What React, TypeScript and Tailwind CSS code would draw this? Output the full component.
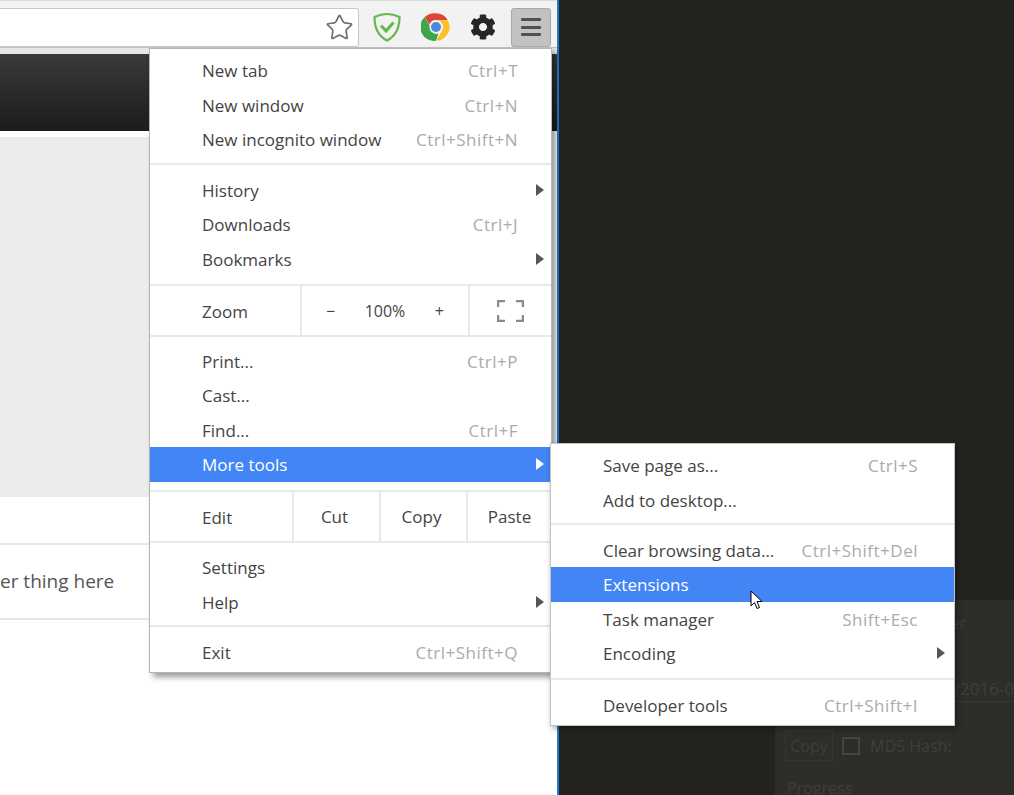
import { Star } from 'lucide-react'
import { FaCog } from 'react-icons/fa'

const font = 'font-["Open_Sans","Noto_Sans",sans-serif]'

function Arrow({ active }: { active?: boolean }) {
  return (
    <svg width="8" height="12" viewBox="0 0 8 12">
      <path d="M0 0L8 6L0 12Z" fill={active ? '#ffffff' : '#555555'} />
    </svg>
  )
}

function Row({ label, shortcut, arrow, active, slot = 'menu' }: {
  label: string
  shortcut?: string
  arrow?: boolean
  active?: boolean
  slot?: 'menu' | 'sub'
}) {
  return (
    <div className={`flex h-[34.5px] items-center pl-[52px] text-[17px] ${active ? 'bg-[#4285f4] text-white' : 'text-[#444444]'}`}>
      <span className="flex-1 pt-[1px]">{label}</span>
      {shortcut && <span className="pt-[1px] tracking-[0.5px] text-[#ababab]">{shortcut}</span>}
      <div className={`flex shrink-0 items-center ${slot === 'menu' ? 'w-[33px] pl-[18px]' : 'w-[36px] pl-[19px]'}`}>
        {arrow && <Arrow active={active} />}
      </div>
    </div>
  )
}

function Sep() {
  return <div className="h-[2px] shrink-0 bg-[#e9e9e9]" />
}

function Cell({ width, children }: { width: number | string; children?: React.ReactNode }) {
  return (
    <div className="flex h-full items-center justify-center border-l-2 border-[#e9e9e9]" style={{ width }}>
      {children}
    </div>
  )
}

function ChromeLogo() {
  return (
    <svg width="30" height="30" viewBox="0 0 48 48">
      <circle cx="24" cy="24" r="23" fill="#ffffff" />
      <path d="M24 2A22 22 0 0 1 43 13H24A11 11 0 0 0 13.5 20.5L6 8A22 22 0 0 1 24 2Z" fill="#db4437" />
      <path d="M43 13A22 22 0 0 1 24 46L33.5 29.5A11 11 0 0 0 33.5 18.5 11 11 0 0 0 24 13Z" fill="#fbc02d" />
      <path d="M6 8L15 24A11 11 0 0 0 28 34.5L24 46A22 22 0 0 1 6 8Z" fill="#3ba74a" />
      <circle cx="24" cy="24" r="10.5" fill="#f4f4f4" />
      <circle cx="24" cy="24" r="8" fill="#4a89dc" />
    </svg>
  )
}

function Shield() {
  return (
    <svg width="30" height="30" viewBox="0 0 30 30" fill="none">
      <path d="M15 2C10 2 5.5 3.5 2.5 5C2.5 16 6 24 15 28.5C24 24 27.5 16 27.5 5C24.5 3.5 20 2 15 2Z" stroke="#62b94c" strokeWidth="2.2" />
      <path d="M9 13.5L14 19L21.5 10.5" stroke="#62b94c" strokeWidth="3" />
    </svg>
  )
}

function Cursor() {
  return (
    <svg width="14" height="20" viewBox="0 0 14 20">
      <path d="M1 1V16L4.5 12.5L7 18.5L9.5 17.5L7 11.5H12Z" fill="#ffffff" stroke="#000000" strokeWidth="1" />
    </svg>
  )
}

export default function App() {
  return (
    <div className={`relative flex h-[795px] w-[1014px] overflow-hidden bg-[#22221f] ${font}`}>
      {/* browser window */}
      <div className="flex h-full w-[559px] shrink-0 flex-col border-r-2 border-[#1e78d2] bg-white">
        <div className="flex h-[48px] shrink-0 items-center border-t border-b border-t-[#dcdcdc] border-b-[#c4c4c4] bg-[#f2f2f2] pt-[6px]">
          <div className="flex h-[39px] w-[359px] items-center justify-end rounded-r-[3px] border border-l-0 border-[#c8c8c8] bg-white pr-[4px]">
            <Star size={29} strokeWidth={1.4} className="text-[#6e6e6e]" />
          </div>
          <div className="ml-[13px]"><Shield /></div>
          <div className="ml-[19px]"><ChromeLogo /></div>
          <FaCog size={26} className="ml-[19px] text-[#262626]" />
          <div className="ml-[15px] flex h-[39px] w-[40px] flex-col items-center justify-center gap-[4.5px] rounded-[3px] border border-[#a8a8a8] bg-[#c2c2c2]">
            <div className="h-[3px] w-[20px] rounded-[1px] bg-[#505050]" />
            <div className="h-[3px] w-[20px] rounded-[1px] bg-[#505050]" />
            <div className="h-[3px] w-[20px] rounded-[1px] bg-[#505050]" />
          </div>
        </div>
        <div className="h-[6px] shrink-0 bg-[#e8e8e8]" />
        <div className="h-[77px] shrink-0 bg-gradient-to-b from-[#3a3a3a] to-[#1c1c1c]" />
        <div className="h-[6px] shrink-0" />
        <div className="h-[360px] w-[500px] shrink-0 bg-[#ececec]" />
        <div className="h-[46px] shrink-0" />
        <div className="flex h-[77px] shrink-0 items-center border-y-2 border-[#e6e6e6] text-[19px] whitespace-nowrap text-[#555555]">
          er thing here
        </div>
      </div>

      {/* app behind the browser */}
      <div className="flex-1 pt-[600px] pl-[216px]">
        <div className="h-[195px] overflow-hidden bg-[#2d2d29] text-[16px] text-[#3f3f3a]">
          <div className="flex h-[35px] items-end justify-end pr-[48px]">er</div>
          <div className="mt-[41px] flex h-[26px] items-center justify-end overflow-hidden border-b border-[#383833] pl-[10px] text-[17px] whitespace-nowrap">/2016-0</div>
          <div className="mt-[28px] flex items-center pl-[10px]">
            <div className="flex h-[31px] w-[48px] items-center justify-center border border-[#363631]">Copy</div>
            <div className="ml-[9px] h-[18px] w-[18px] border-2 border-[#45453f]" />
            <span className="ml-[10px] whitespace-nowrap">MD5 Hash:</span>
          </div>
          <div className="mt-[15px] pl-[12px]">Progress</div>
        </div>
      </div>

      {/* main menu */}
      <div className="absolute top-[48px] left-[149px] flex h-[625px] w-[403px] flex-col border border-[#b5b5b5] bg-white shadow-[4px_4px_6px_rgba(0,0,0,0.4)]">
        <div className="pt-[4px] pb-[6px]">
          <Row label="New tab" shortcut="Ctrl+T" />
          <Row label="New window" shortcut="Ctrl+N" />
          <Row label="New incognito window" shortcut="Ctrl+Shift+N" />
        </div>
        <Sep />
        <div className="pt-[8px] pb-[8px]">
          <Row label="History" arrow />
          <Row label="Downloads" shortcut="Ctrl+J" />
          <Row label="Bookmarks" arrow />
        </div>
        <Sep />
        <div className="flex h-[49px] items-center pl-[52px] text-[17px] text-[#444444]">
          <span className="w-[98px] pt-[2px]">Zoom</span>
          <Cell width={168}>
            <div className="flex w-full items-center justify-between px-[24px] text-[16px]">
              <span>−</span>
              <span>100%</span>
              <span>+</span>
            </div>
          </Cell>
          <Cell width={82}>
            <svg width="27" height="22" viewBox="0 0 27 22" fill="none" stroke="#8a8a8a" strokeWidth="2.5">
              <path d="M1 7V1H8M19 1H26V7M26 15V21H19M8 21H1V15" />
            </svg>
          </Cell>
        </div>
        <Sep />
        <div className="pt-[6.5px] pb-[8.5px]">
          <Row label="Print..." shortcut="Ctrl+P" />
          <Row label="Cast..." />
          <Row label="Find..." shortcut="Ctrl+F" />
          <Row label="More tools" arrow active />
        </div>
        <Sep />
        <div className="flex h-[49px] items-center pl-[52px] text-[17px] text-[#444444]">
          <span className="w-[90px] pt-[2px]">Edit</span>
          <Cell width={87}><span className="pr-[4px]">Cut</span></Cell>
          <Cell width={87}><span className="pr-[4px]">Copy</span></Cell>
          <Cell width={85}>Paste</Cell>
        </div>
        <Sep />
        <div className="pt-[7px] pb-[6px]">
          <Row label="Settings" />
          <Row label="Help" arrow />
        </div>
        <Sep />
        <div className="pt-[8px]">
          <Row label="Exit" shortcut="Ctrl+Shift+Q" />
        </div>
      </div>

      {/* more tools submenu */}
      <div className="absolute top-[443px] left-[550px] flex h-[283px] w-[405px] flex-col border border-[#c4c4c4] bg-white shadow-[2px_2px_6px_rgba(0,0,0,0.4)]">
        <div className="pt-[4px] pb-[6px]">
          <Row slot="sub" label="Save page as..." shortcut="Ctrl+S" />
          <Row slot="sub" label="Add to desktop..." />
        </div>
        <Sep />
        <div className="pt-[7.5px] pb-[7.5px]">
          <Row slot="sub" label="Clear browsing data..." shortcut="Ctrl+Shift+Del" />
          <Row slot="sub" label="Extensions" active />
          <Row slot="sub" label="Task manager" shortcut="Shift+Esc" />
          <Row slot="sub" label="Encoding" arrow />
        </div>
        <Sep />
        <div className="pt-[8px]">
          <Row slot="sub" label="Developer tools" shortcut="Ctrl+Shift+I" />
        </div>
      </div>

      <div className="absolute top-[590px] left-[750px]"><Cursor /></div>
    </div>
  )
}
